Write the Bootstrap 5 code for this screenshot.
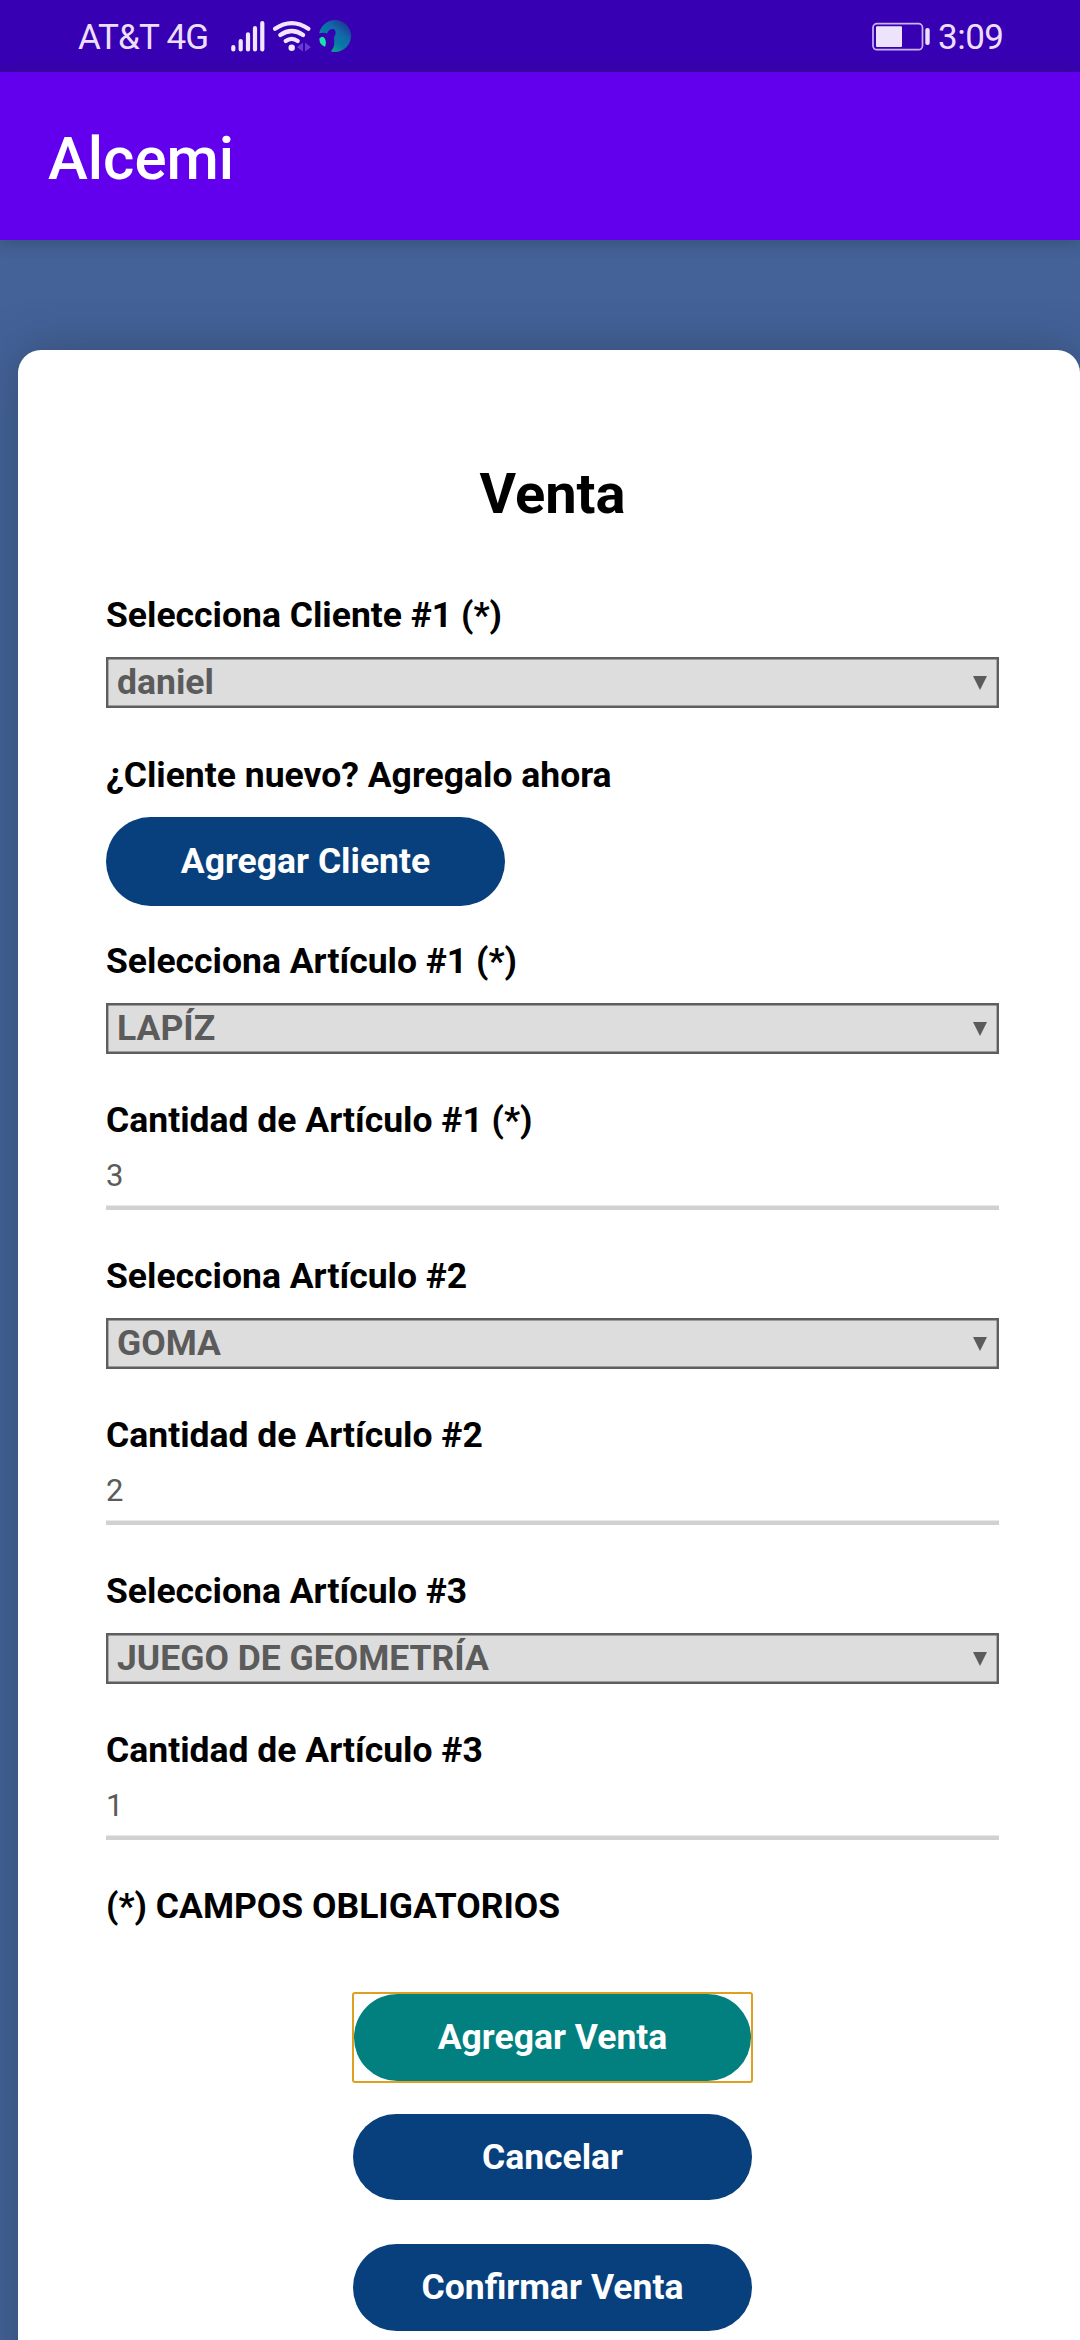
<!DOCTYPE html>
<html lang="es">
<head>
<meta charset="utf-8">
<meta name="viewport" content="width=device-width, initial-scale=1">
<title>Alcemi</title>
<link href="https://cdn.jsdelivr.net/npm/bootstrap@5.3.0/dist/css/bootstrap.min.css" rel="stylesheet">
<style>
  body { font-family: Roboto, "Liberation Sans", sans-serif; background: #446198; color: #000; width: 1080px; height: 2340px; overflow: hidden; }
  .status-bar { height: 72px; background: #3800b3; color: #ecdffc; font-size: 35px; line-height: 41px; padding: 0 78px 0 78px; }
  .status-bar svg { display: block; }
  .carrier { width: 151px; letter-spacing: -.75px; white-space: nowrap; padding-top: 2px; }
  .clock { width: 64px; letter-spacing: -.5px; white-space: nowrap; padding-top: 2px; }
  .app-bar { height: 168px; background: #6200ee; padding: 6px 48px 0; box-shadow: 0 2px 14px rgba(30,50,50,.38); position: relative; }
  .app-name { font-size: 60px; font-weight: 500; line-height: 72px; color: #fff; }
  .sheet { margin: 110.4px 0 0 17.5px; height: 2100px; border-radius: 23px; padding: 110.6px 81px 0 88.5px; box-shadow: 0 0 44px rgba(40,65,90,.56); }
  .sheet-title { font-size: 56px; line-height: 66px; margin: 0 0 68px; }
  .field-label { font-size: 35.5px; line-height: 41px; height: 41px; white-space: nowrap; }
  .pick { height: 51px; margin: 21.5px 0 45.5px; box-shadow: inset 0 0 0 2.4px #5e5e5e; background: #ddd; color: #5b5b5b; font-size: 35.5px; line-height: 47px; padding: 0 12px 0 11px; }
  .pick-first { margin-bottom: 46.5px; }
  .amount { height: 69px; margin-bottom: 46px; box-shadow: inset 0 -4.6px 0 #d1d1d1; color: #5b5b5b; font-size: 31px; line-height: 36px; padding-top: 17px; }
  .pill { width: 399px; height: 86.5px; border: 0; padding: 0; font-size: 35.5px; background: #083f7d !important; color: #fff !important; }
  .pill-tall { height: 89px; margin: 21px 0 35px; }
  .outline-box { border: 2px solid #df9f20; border-radius: 3px; width: 401px; height: 91px; }
  .outline-box .pill { width: 100%; height: 100%; background: #028080 !important; }
  .actions { margin-top: 65px; }
  .pill-cancel { margin-top: 31px; }
  .pill-confirm { margin-top: 44px; }
</style>
<script src="https://cdn.jsdelivr.net/npm/bootstrap@5.3.0/dist/js/bootstrap.bundle.min.js"></script>
</head>
<body>
<header>
  <div class="status-bar d-flex align-items-center justify-content-between">
    <div class="d-flex align-items-center">
      <span class="carrier">AT&amp;T 4G</span>
      <svg width="124" height="72" viewBox="229 0 124 72">
        <defs>
          <linearGradient id="globe" x1=".1" y1="1" x2=".85" y2=".1"><stop offset="0" stop-color="#12c47b"/><stop offset=".45" stop-color="#0879a6"/><stop offset=".7" stop-color="#1268a8"/><stop offset="1" stop-color="#1b3a91"/></linearGradient>
        </defs>
        <g stroke="#f0e6ff" stroke-width="4.2" stroke-linecap="round" fill="none">
          <path d="M233.300 47.200v2.300M240.700 41v8.500M248 34.300v15.200M255 28.200v21.300M262.300 23v26.500"/>
          <path d="M275 28.800q16.700-11.500 33.400 0M280.300 35q11.400-8 22.800 0M285.700 41q6-4.200 12 0"/>
        </g>
        <circle cx="291.700" cy="47.700" r="3.200" fill="#f0e6ff"/>
        <path d="M303 42.500v9l-6-4.300zM305 42.500v9l6-4.300z" fill="#693bd0"/>
        <circle cx="335" cy="36" r="16" fill="url(#globe)"/>
        <path d="M316 35Q321 31.500 327 33.500L328.500 31Q331 28 334.500 29.500Q337 33 334 37Q335 46 332.500 49L330 53H316Z" fill="#3800b3"/>
        <path d="M319.300 38.500q3.500-3.500 5.500 0 2 4 .2 8.200-5.500-1.500-5.700-8.200z" fill="#18e3a8"/>
      </svg>
    </div>
    <div class="d-flex align-items-center">
      <svg width="67" height="72" viewBox="870 0 67 72">
        <rect x="872" y="23.700" width="49.500" height="26" rx="4" fill="none" stroke="#cbb2f2" stroke-width="1.700"/>
        <rect x="875" y="26.300" width="26" height="20.700" rx="1" fill="#eee3fc"/>
        <rect x="924.300" y="28" width="4.400" height="17" rx="2" fill="#ecdffc"/>
      </svg>
      <span class="clock">3:09</span>
    </div>
  </div>
  <div class="app-bar d-flex align-items-center"><span class="app-name">Alcemi</span></div>
</header>

<main class="sheet bg-white">
  <h1 class="sheet-title fw-bold text-center">Venta</h1>

  <div class="field-label fw-bold">Selecciona Cliente #1 (*)</div>
  <div class="pick pick-first fw-bold d-flex justify-content-between align-items-center"><span>daniel</span><svg width="14" height="14" viewBox="0 0 14 14"><path d="M0 0h14L7 14z" fill="#5b5b5b"/></svg></div>

  <div class="field-label fw-bold">¿Cliente nuevo? Agregalo ahora</div>
  <button type="button" class="btn rounded-pill fw-bold d-block pill pill-tall">Agregar Cliente</button>

  <div class="field-label fw-bold">Selecciona Artículo #1 (*)</div>
  <div class="pick fw-bold d-flex justify-content-between align-items-center"><span>LAPÍZ</span><svg width="14" height="14" viewBox="0 0 14 14"><path d="M0 0h14L7 14z" fill="#5b5b5b"/></svg></div>
  <div class="field-label fw-bold">Cantidad de Artículo #1 (*)</div>
  <div class="amount">3</div>

  <div class="field-label fw-bold">Selecciona Artículo #2</div>
  <div class="pick fw-bold d-flex justify-content-between align-items-center"><span>GOMA</span><svg width="14" height="14" viewBox="0 0 14 14"><path d="M0 0h14L7 14z" fill="#5b5b5b"/></svg></div>
  <div class="field-label fw-bold">Cantidad de Artículo #2</div>
  <div class="amount">2</div>

  <div class="field-label fw-bold">Selecciona Artículo #3</div>
  <div class="pick fw-bold d-flex justify-content-between align-items-center"><span>JUEGO DE GEOMETRÍA</span><svg width="14" height="14" viewBox="0 0 14 14"><path d="M0 0h14L7 14z" fill="#5b5b5b"/></svg></div>
  <div class="field-label fw-bold">Cantidad de Artículo #3</div>
  <div class="amount">1</div>

  <div class="field-label fw-bold">(*) CAMPOS OBLIGATORIOS</div>

  <div class="actions d-flex flex-column align-items-center">
    <div class="outline-box"><button type="button" class="btn rounded-pill fw-bold d-block pill">Agregar Venta</button></div>
    <button type="button" class="btn rounded-pill fw-bold pill pill-cancel">Cancelar</button>
    <button type="button" class="btn rounded-pill fw-bold pill pill-confirm">Confirmar Venta</button>
  </div>
</main>
</body>
</html>
